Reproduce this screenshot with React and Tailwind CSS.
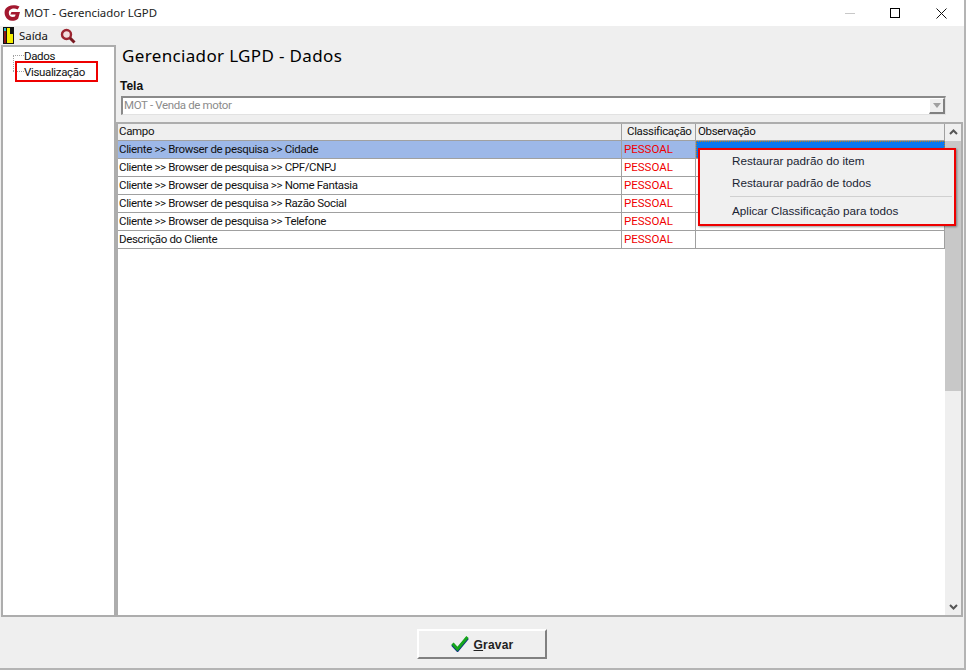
import React from "react";

const rows = [
  "Cliente >> Browser de pesquisa >> Cidade",
  "Cliente >> Browser de pesquisa >> CPF/CNPJ",
  "Cliente >> Browser de pesquisa >> Nome Fantasia",
  "Cliente >> Browser de pesquisa >> Razão Social",
  "Cliente >> Browser de pesquisa >> Telefone",
  "Descrição do Cliente",
];

const Logo = () => (
  <svg width="18" height="18" viewBox="0 0 18 18">
    <path d="M16.5 2.6 C12 0.2 5 0.6 2.4 5 C0 9.6 3 16.6 9 16.8 C11.8 16.8 14 15.8 15.2 14.4 L17 8 L8.4 8 L7.4 10.6 L12.6 10.6 L12 12.6 C9 14 5.8 12.2 5.8 9 C5.8 5 10.6 3.4 14.6 5.4 Z" fill="#a3182f" />
  </svg>
);

const DoorIcon = () => (
  <svg width="11" height="17" viewBox="0 0 11 17">
    <rect x="0" y="0" width="11" height="17" fill="#111" />
    <rect x="4" y="1" width="6" height="15" fill="#f5ee00" />
    <rect x="1" y="1" width="2" height="15" fill="#8c1414" />
    <rect x="1" y="1" width="2" height="3" fill="#30b8c8" />
    <rect x="7" y="1" width="3" height="6" fill="#111" />
  </svg>
);

const SearchIcon = () => (
  <svg width="16" height="16" viewBox="0 0 16 16">
    <circle cx="6.5" cy="6.5" r="4.5" fill="#f2dede" stroke="#9c2530" strokeWidth="2.4" />
    <path d="M10 10 L14.5 14.5" stroke="#7a1a22" strokeWidth="3" />
  </svg>
);

const Check = () => (
  <svg width="18" height="16" viewBox="0 0 18 16">
    <path d="M1.5 8.5 L6.5 14 L16.5 2" fill="none" stroke="#0b2a8a" strokeWidth="3.4" />
    <path d="M1.5 7.5 L6.5 13 L16.5 1" fill="none" stroke="#16a51c" strokeWidth="3" />
  </svg>
);

export default function App() {
  return (
    <div className="w-[967px] h-[670px] bg-white overflow-hidden text-[11.5px] tracking-[-0.35px] text-[#111] font-['Roboto',sans-serif]">
      <div className="w-[966px] h-[670px] flex flex-col border-r-2 border-b-2 border-[#b4b4b4] bg-[#efefef] relative">
        {/* titlebar */}
        <div className="h-[26px] bg-white flex items-center pl-[3px] shrink-0">
          <Logo />
          <span className="ml-[3px] text-[11.4px] tracking-normal font-['Noto_Sans',sans-serif] text-[#222]">MOT - Gerenciador LGPD</span>
          <div className="ml-auto flex items-center text-black">
            <div className="w-[10px] h-px bg-[#c8c8c8] mr-[35px]" />
            <div className="w-[10px] h-[10px] border border-black mr-[36px]" />
            <svg width="11" height="11" viewBox="0 0 11 11" className="mr-[17px]">
              <path d="M0.5 0.5 L10.5 10.5 M10.5 0.5 L0.5 10.5" stroke="#111" />
            </svg>
          </div>
        </div>
        {/* toolbar */}
        <div className="h-[19px] flex items-center pl-[3px] shrink-0">
          <DoorIcon />
          <span className="ml-[5px] text-[11.4px] tracking-normal font-['Noto_Sans',sans-serif]">Saída</span>
          <span className="ml-[12px] flex"><SearchIcon /></span>
        </div>
        {/* main */}
        <div className="flex-1 flex min-h-0 pl-px">
          <div className="relative w-[115px] h-[572px] bg-white border-2 border-[#adadad] shrink-0 pt-[1px] pl-[21px]">
            <div className="absolute left-[10px] top-[8px] w-px h-[16px] border-l border-dotted border-[#a0a0a0]" />
            <div className="absolute left-[10px] top-[8px] w-[11px] border-t border-dotted border-[#a0a0a0]" />
            <div className="absolute left-[10px] top-[24px] w-[11px] border-t border-dotted border-[#a0a0a0]" />
            <div className="h-[16px] leading-[16px]">Dados</div>
            <div className="h-[16px] leading-[16px]">Visualização</div>
            <div className="absolute left-[12px] top-[14px] w-[83px] h-[21px] border-2 border-[#ee0000]" />
          </div>
          <div className="flex-1 min-w-0 flex flex-col">
            <div className="pl-[6px] h-[33px] text-[17px] leading-[22px] text-black font-['Noto_Sans',sans-serif] tracking-[0.35px]">Gerenciador LGPD - Dados</div>
            <div className="pl-[4px] mt-[1px] h-[15px] leading-[15px] font-bold font-['Liberation_Sans',sans-serif] text-[12px] tracking-normal">Tela</div>
            <div className="ml-[5px] mr-[18px] mt-[2px] h-[19px] bg-white border-t-2 border-l-2 border-[#8a8a8a] border-b border-r border-b-[#e2e2e2] border-r-[#e2e2e2] flex items-center pl-[1px] text-[#8b8b8b]">
              <span>MOT - Venda de motor</span>
              <div className="ml-auto w-[16px] h-[16px] bg-[#efefef] border-r-2 border-b-2 border-[#808080] border-l border-t border-l-white border-t-white flex items-center justify-center">
                <div className="w-0 h-0 border-l-[4px] border-r-[4px] border-t-[5px] border-l-transparent border-r-transparent border-t-[#a0a0a0]" />
              </div>
            </div>
            <div className="mt-[7px] h-[497px] mr-[1px] bg-white border-2 border-[#adadad] flex relative">
              <div className="flex-1 min-w-0">
                <div className="flex h-[17px] bg-[#efefef] border-b border-[#a0a0a0]">
                  <div className="w-[504px] pl-[1px] leading-[15px] border-r border-[#a0a0a0]">Campo</div>
                  <div className="w-[74px] pl-[5px] leading-[15px] border-r border-[#a0a0a0]">Classificação</div>
                  <div className="w-[249px] pl-[2px] leading-[15px] border-r border-[#a0a0a0]">Observação</div>
                </div>
                {rows.map((r, i) => (
                  <div key={r} className="flex h-[18px] border-b border-[#a0a0a0] w-[827px]">
                    <div className={`w-[504px] pl-[1px] leading-[16px] border-r border-[#a0a0a0] ${i === 0 ? "bg-[#9db8e8]" : ""}`}>{r}</div>
                    <div className={`w-[74px] pl-[2px] leading-[16px] border-r border-[#a0a0a0] text-[#f00000] tracking-normal ${i === 0 ? "bg-[#9db8e8]" : ""}`}>PESSOAL</div>
                    <div className={`w-[249px] border-r border-[#a0a0a0] ${i === 0 ? "bg-[#0a78f0] border border-dotted border-[#c08020]" : ""}`} />
                  </div>
                ))}
              </div>
              <div className="w-[16px] h-full flex flex-col bg-[#efefef] shrink-0">
                <div className="h-[17px] flex items-center justify-center">
                  <svg width="9" height="6" viewBox="0 0 9 6"><path d="M1 5 L4.5 1.5 L8 5" fill="none" stroke="#555" strokeWidth="2" /></svg>
                </div>
                <div className="h-[250px] bg-[#c8c8c8]" />
                <div className="mt-auto h-[17px] flex items-center justify-center">
                  <svg width="9" height="6" viewBox="0 0 9 6"><path d="M1 1 L4.5 4.5 L8 1" fill="none" stroke="#555" strokeWidth="2" /></svg>
                </div>
              </div>
              <div className="absolute left-[580px] top-[24px] w-[258px] h-[78px] bg-[#f0f0f0] border-2 border-[#ee0000] shadow-[1px_1px_2px_rgba(0,0,0,0.4)] text-[#1a2433] text-[11.7px] tracking-normal font-['Liberation_Sans',sans-serif]">
                <div className="pl-[32px] h-[22px] leading-[22px]">Restaurar padrão do item</div>
                <div className="pl-[32px] h-[22px] leading-[22px]">Restaurar padrão de todos</div>
                <div className="ml-[30px] mr-[2px] mt-[2px] mb-[3px] border-t border-[#d0d0d0]" />
                <div className="pl-[32px] h-[22px] leading-[22px]">Aplicar Classificação para todos</div>
              </div>
            </div>
          </div>
        </div>
        {/* footer */}
        <div className="h-[51px] shrink-0 flex items-start justify-center pt-[12px]">
          <button className="w-[130px] h-[30px] bg-[#efefef] border-t-2 border-l-2 border-white border-r-2 border-b-2 border-r-[#808080] border-b-[#808080] flex items-center justify-center gap-[5px] font-bold text-[12px] text-[#222] tracking-[0.2px] font-['Liberation_Sans',sans-serif]">
            <Check />
            <span className="pt-[2px]"><span className="underline">G</span>ravar</span>
          </button>
        </div>
      </div>
    </div>
  );
}
